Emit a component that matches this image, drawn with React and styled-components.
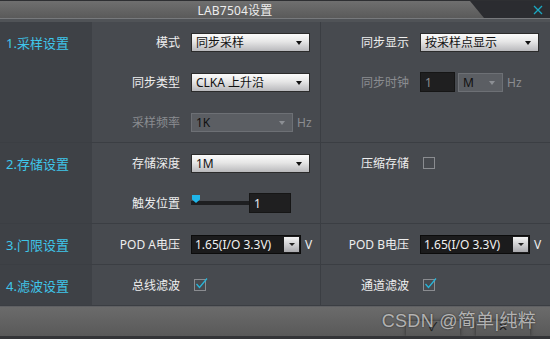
import React from 'react';
import styled, {createGlobalStyle} from 'styled-components';

const GlobalStyle = createGlobalStyle`
    html, body {
        margin: 0;
        padding: 0;
        background: #474a4f;
        overflow: hidden;
    }
    * { box-sizing: border-box; }
`;

const CJK = `"Noto Sans", "Noto Sans CJK SC", sans-serif`;

//Dialog frame
const Dialog = styled.div`
    position: relative;
    width: 550px;
    height: 339px;
    display: flex;
    flex-direction: column;
    background: #474a4f;
    font-family: ${CJK};
    font-size: 12px;
    color: #ececec;
    overflow: hidden;
`;

const TitleBar = styled.div`
    height: 18px;
    display: flex;
    border-top: 1px solid #2e2f32;
    background: linear-gradient(#6f6f6f, #5a5a5a);
`;

const TitleText = styled.div`
    flex: 1;
    display: flex;
    align-items: center;
    justify-content: center;
    color: #ededed;
    font-size: 12px;
    letter-spacing: 0.2px;
`;

const TitleCap = styled.div`
    width: 80px;
    display: flex;
    align-items: center;
    justify-content: flex-end;
    padding-right: 7px;
    background: #2b2c30;
    clip-path: polygon(0 0, 100% 0, 100% 100%, 14px 100%);
`;

const TitleStrip = styled.div`
    height: 4px;
    border-top: 1px solid #77797c;
    background: #505357;
`;

//Section rows
const Section = styled.div`
    display: grid;
    grid-template-columns: 92px 229px 229px;
    border-bottom: 1px solid #3b3e43;
`;

const SideCell = styled.div`
    background: #3e4146;
    height: 100%;
`;

const SideLabel = styled.div`
    height: 40px;
    display: flex;
    align-items: center;
    padding-left: 6px;
    color: #3ec6ea;
    font-size: 13px;
`;

const Column = styled.div`
    display: flex;
    flex-direction: column;
    border-right: ${p => (p.divider ? '1px solid #3b3e43' : 'none')};
`;

const Row = styled.div`
    height: 40px;
    display: flex;
    align-items: center;
`;

const FieldLabel = styled.div`
    width: 88px;
    text-align: right;
    margin-right: 11px;
    color: ${p => (p.disabled ? '#8b8d91' : '#eeeeee')};
    white-space: nowrap;
`;

const Unit = styled.span`
    margin-left: 4px;
    color: ${p => (p.disabled ? '#8b8d91' : '#eeeeee')};
`;

//Combo boxes
const Select = styled.div`
    position: relative;
    width: ${p => p.width || 119}px;
    height: 19px;
    display: flex;
    align-items: center;
    padding-left: 4px;
    border: 1px solid ${p => (p.disabled ? '#6d7075' : '#2b2b2b')};
    background: ${p => (p.disabled ? '#5b5e63' : 'linear-gradient(#fbfbfb, #e6e6e6 45%, #b9b9bc)')};
    color: #111;
    white-space: nowrap;
`;

const Arrow = styled.span`
    position: absolute;
    right: 7px;
    top: 7px;
    width: 0;
    height: 0;
    border-left: 3px solid transparent;
    border-right: 3px solid transparent;
    border-top: 4px solid ${p => (p.disabled ? '#8c8f94' : '#111')};
`;

const DarkSelect = styled.div`
    position: relative;
    width: 110px;
    height: 19px;
    display: flex;
    align-items: center;
    padding-left: 3px;
    background: #1b1b1c;
    border: 1px solid #0c0c0c;
    color: #f0f0f0;
    white-space: nowrap;
`;

const DropButton = styled.span`
    position: absolute;
    right: 1px;
    top: 1px;
    width: 15px;
    height: 15px;
    background: linear-gradient(#f4f4f4, #c9c9cc 60%, #a9a9ad);
    &::after {
        content: '';
        position: absolute;
        left: 5px;
        top: 6px;
        border-left: 3px solid transparent;
        border-right: 3px solid transparent;
        border-top: 3px solid #222;
    }
`;

const Input = styled.div`
    width: ${p => p.width}px;
    height: 20px;
    display: flex;
    align-items: center;
    padding-left: 4px;
    background: #1f1f20;
    border: 1px solid #161616;
    color: ${p => (p.disabled ? '#8b8d91' : '#e8eef2')};
    margin-right: ${p => p.gap || 0}px;
`;

const Checkbox = styled.div`
    width: 12px;
    height: 12px;
    margin-left: ${p => p.offset || 0}px;
    border: 1px solid #8a8c90;
    position: relative;
`;

//Slider
const Slider = styled.div`
    display: flex;
    align-items: center;
`;

const Track = styled.div`
    position: relative;
    width: 58px;
    height: 4px;
    background: #1e1f21;
`;

const Thumb = styled.div`
    position: absolute;
    left: 1px;
    top: -6px;
    width: 8px;
    height: 8px;
    background: #1fb6ea;
    clip-path: polygon(0 0, 100% 0, 100% 55%, 50% 100%, 0 55%);
`;

//Footer
const Footer = styled.div`
    flex: 1;
    display: flex;
    justify-content: flex-end;
    align-items: flex-end;
    gap: 16px;
    padding-right: 20px;
    border-top: 1px solid #5f6063;
    border-bottom: 3px solid #333437;
    background: linear-gradient(#6b6b6b, #595959);
    overflow: hidden;
`;

const FooterButton = styled.div`
    width: 54px;
    height: 15px;
    display: flex;
    justify-content: center;
    background: linear-gradient(#646464, #575757);
    box-shadow: 0 0 4px rgba(0, 0, 0, 0.55);
    color: #1e1e1e;
    font-size: 12px;
    line-height: 12px;
`;

const Watermark = styled.div`
    position: absolute;
    right: 14px;
    bottom: 7px;
    font-family: "Liberation Sans", "Noto Sans CJK SC", sans-serif;
    font-size: 18px;
    color: rgba(225, 225, 225, 0.72);
    text-shadow: 0 0 2px rgba(0, 0, 0, 0.6);
    letter-spacing: 0.3px;
    pointer-events: none;
`;

const Check = () => (
    <svg width="14" height="12" viewBox="0 0 14 12" style={{position: 'absolute', left: 0, top: -3}}>
        <path d="M1.5 7 L4.5 10.5 L12 1.5" fill="none" stroke="#27b5da" strokeWidth="1.3" />
    </svg>
);

const CloseIcon = () => (
    <svg width="10" height="10" viewBox="0 0 10 10">
        <path d="M1 1 L9 9 M9 1 L1 9" stroke="#1aa8c2" strokeWidth="1.3" />
    </svg>
);

const App = () => {
    return (
        <>
            <GlobalStyle />
            <Dialog>
                <TitleBar>
                    <TitleText>LAB7504设置</TitleText>
                    <TitleCap><CloseIcon /></TitleCap>
                </TitleBar>
                <TitleStrip />

                <Section>
                    <SideCell><SideLabel>1.采样设置</SideLabel></SideCell>
                    <Column divider>
                        <Row>
                            <FieldLabel>模式</FieldLabel>
                            <Select>同步采样<Arrow /></Select>
                        </Row>
                        <Row>
                            <FieldLabel>同步类型</FieldLabel>
                            <Select>CLKA 上升沿<Arrow /></Select>
                        </Row>
                        <Row>
                            <FieldLabel disabled>采样频率</FieldLabel>
                            <Select disabled width={102}>1K<Arrow disabled /></Select>
                            <Unit disabled>Hz</Unit>
                        </Row>
                    </Column>
                    <Column>
                        <Row>
                            <FieldLabel>同步显示</FieldLabel>
                            <Select>按采样点显示<Arrow /></Select>
                        </Row>
                        <Row>
                            <FieldLabel disabled>同步时钟</FieldLabel>
                            <Input width={35} gap={3} disabled>1</Input>
                            <Select disabled width={45}>M<Arrow disabled /></Select>
                            <Unit disabled>Hz</Unit>
                        </Row>
                    </Column>
                </Section>

                <Section>
                    <SideCell><SideLabel>2.存储设置</SideLabel></SideCell>
                    <Column divider>
                        <Row>
                            <FieldLabel>存储深度</FieldLabel>
                            <Select>1M<Arrow /></Select>
                        </Row>
                        <Row>
                            <FieldLabel>触发位置</FieldLabel>
                            <Slider>
                                <Track><Thumb /></Track>
                                <Input width={42}>1</Input>
                            </Slider>
                        </Row>
                    </Column>
                    <Column>
                        <Row>
                            <FieldLabel>压缩存储</FieldLabel>
                            <Checkbox offset={3} />
                        </Row>
                    </Column>
                </Section>

                <Section>
                    <SideCell><SideLabel>3.门限设置</SideLabel></SideCell>
                    <Column divider>
                        <Row>
                            <FieldLabel>POD A电压</FieldLabel>
                            <DarkSelect>1.65(I/O 3.3V)<DropButton /></DarkSelect>
                            <Unit>V</Unit>
                        </Row>
                    </Column>
                    <Column>
                        <Row>
                            <FieldLabel>POD B电压</FieldLabel>
                            <DarkSelect>1.65(I/O 3.3V)<DropButton /></DarkSelect>
                            <Unit>V</Unit>
                        </Row>
                    </Column>
                </Section>

                <Section>
                    <SideCell><SideLabel>4.滤波设置</SideLabel></SideCell>
                    <Column divider>
                        <Row>
                            <FieldLabel>总线滤波</FieldLabel>
                            <Checkbox offset={3}><Check /></Checkbox>
                        </Row>
                    </Column>
                    <Column>
                        <Row>
                            <FieldLabel>通道滤波</FieldLabel>
                            <Checkbox offset={3}><Check /></Checkbox>
                        </Row>
                    </Column>
                </Section>

                <Footer>
                    <FooterButton>✓</FooterButton>
                    <FooterButton>✕</FooterButton>
                </Footer>
                <Watermark>CSDN @简单|纯粹</Watermark>
            </Dialog>
        </>
    );
}

export default App;
